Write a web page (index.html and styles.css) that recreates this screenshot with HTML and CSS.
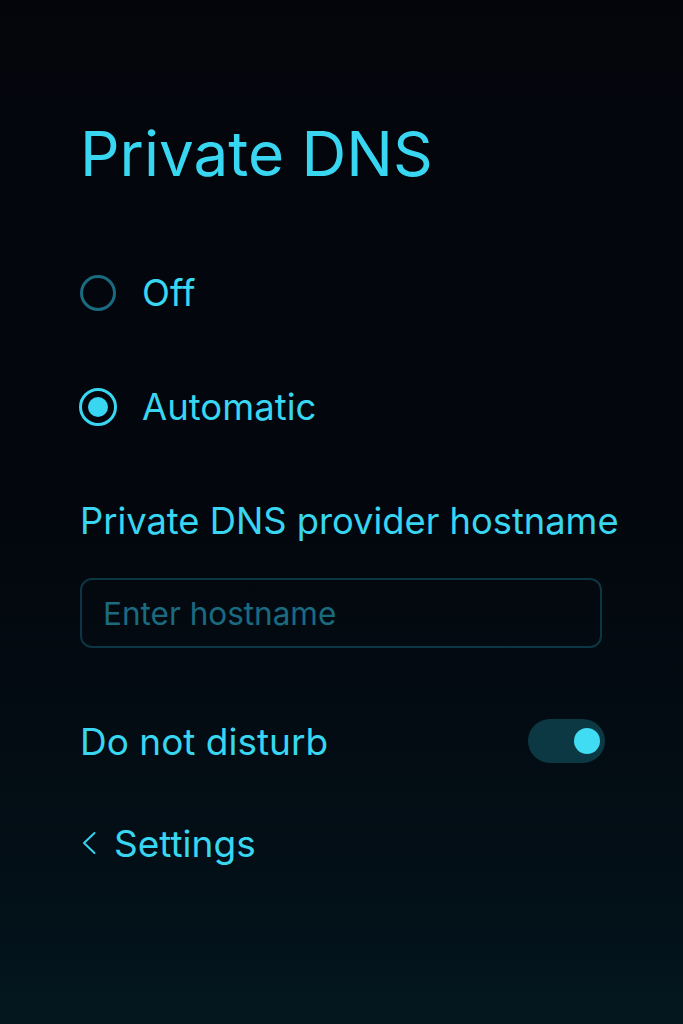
FILE: index.html
```html
<!DOCTYPE html>
<html lang="en">
<head>
<meta charset="utf-8">
<title>Private DNS</title>
<link rel="stylesheet" href="styles.css">
</head>
<body>
<main class="screen">
  <h1 class="title">Private DNS</h1>

  <div class="options">
    <label class="option">
      <span class="radio"></span>
      <span class="option-text">Off</span>
    </label>
    <label class="option">
      <span class="radio radio-on"><span class="radio-dot"></span></span>
      <span class="option-text">Automatic</span>
    </label>
  </div>

  <div class="field">
    <div class="field-label">Private DNS provider hostname</div>
    <div class="input"><span class="placeholder">Enter hostname</span></div>
  </div>

  <div class="toggle-row">
    <span class="toggle-text">Do not disturb</span>
    <span class="toggle"><span class="knob"></span></span>
  </div>

  <div class="back">
    <svg class="chevron" width="14" height="26" viewBox="0 0 14 26"><path d="M12.5 3 L2 13 L12.5 23" fill="none" stroke="#35d3ef" stroke-width="2" stroke-linecap="round" stroke-linejoin="round"/></svg>
    <span class="back-text">Settings</span>
  </div>
</main>
</body>
</html>
```

FILE: styles.css
```css
html, body {
  margin: 0;
  padding: 0;
}
body {
  width: 683px;
  height: 1024px;
  background: linear-gradient(180deg, #03050b 0%, #03070d 50%, #030f17 85%, #04171f 100%);
  font-family: Inter, "Noto Sans", sans-serif;
  color: #38d6f1;
  overflow: hidden;
}
.screen {
  display: flex;
  flex-direction: column;
  padding: 0 81px 0 80px;
}
.title {
  margin: 114px 0 0 0;
  font-size: 62px;
  font-weight: 400;
  line-height: 80px;
  letter-spacing: 0;
}
.options {
  display: flex;
  flex-direction: column;
  gap: 70px;
  margin-top: 77px;
}
.option {
  display: flex;
  align-items: center;
  height: 44px;
  gap: 26px;
}
.radio {
  width: 36px;
  height: 36px;
  box-sizing: border-box;
  border: 3px solid #1a6a80;
  border-radius: 50%;
  flex: none;
  display: flex;
  align-items: center;
  justify-content: center;
}
.radio-on {
  width: 38px;
  height: 38px;
  margin-left: -1px;
  margin-right: -1px;
  border-color: #38d6f1;
}
.radio-dot {
  width: 20px;
  height: 20px;
  border-radius: 50%;
  background: #38d6f1;
}
.option-text {
  font-size: 36.5px;
  line-height: 44px;
}
.field {
  display: flex;
  flex-direction: column;
  margin-top: 70px;
}
.field-label {
  font-size: 36.3px;
  line-height: 44px;
  white-space: nowrap;
}
.input {
  margin-top: 35px;
  height: 70px;
  box-sizing: border-box;
  border: 2px solid #0d3645;
  border-radius: 12px;
  display: flex;
  align-items: center;
  padding-left: 21px;
}
.placeholder {
  font-size: 31.5px;
  color: #1a6a80;
}
.toggle-row {
  display: flex;
  align-items: center;
  justify-content: space-between;
  margin-top: 71px;
  margin-right: -3px;
  height: 44px;
}
.toggle-text {
  font-size: 37px;
}
.toggle {
  width: 77px;
  height: 44px;
  border-radius: 22px;
  background: #0c3844;
  display: flex;
  align-items: center;
  justify-content: flex-end;
  padding-right: 5px;
  box-sizing: border-box;
}
.knob {
  width: 26px;
  height: 26px;
  border-radius: 50%;
  background: #3fdcf4;
}
.back {
  display: flex;
  align-items: center;
  gap: 18px;
  margin-top: 58px;
  height: 44px;
  padding-left: 2px;
}
.chevron {
  flex: none;
}
.back-text {
  font-size: 37px;
}
```
